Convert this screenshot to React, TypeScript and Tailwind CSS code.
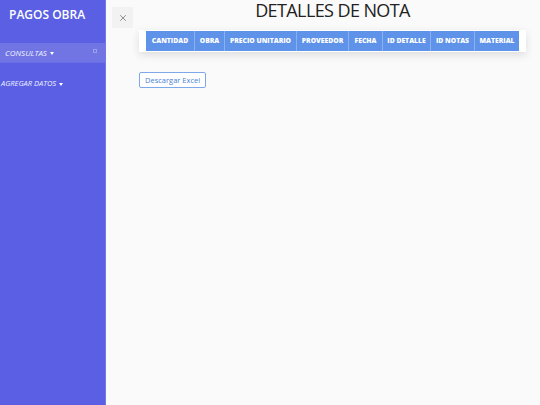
import { X } from "lucide-react"

const cols = [
  { label: "CANTIDAD", w: "w-[48px]" },
  { label: "OBRA", w: "w-[30px]" },
  { label: "PRECIO UNITARIO", w: "w-[72px]" },
  { label: "PROVEEDOR", w: "w-[52px]" },
  { label: "FECHA", w: "w-[34px]" },
  { label: "ID DETALLE", w: "w-[48px]" },
  { label: "ID NOTAS", w: "w-[44px]" },
  { label: "MATERIAL", w: "w-[45px]" },
]

function Caret() {
  return <span className="ml-[3px] inline-block h-0 w-0 border-x-[2.5px] border-t-[3px] border-x-transparent border-t-white align-middle" />
}

export default function App() {
  return (
    <div className="flex h-[405px] w-[540px] overflow-hidden bg-[#fafafa] font-['Open_Sans',sans-serif]">
      <aside className="flex w-[106px] shrink-0 flex-col border-r border-[#7479ea] bg-[#5a5fe4] text-white">
        <div className="pl-[9px] pt-[6px] text-[12px] font-semibold leading-[18px]">PAGOS OBRA</div>
        <div className="mt-[19px] flex h-[20px] items-center justify-between border-b border-[#6a6fe6] bg-[#7075e3] pl-[5px] pr-[8px] text-[8px] italic text-[#eef0ff]">
          <span>
            CONSULTAS
            <Caret />
          </span>
          <span className="mb-[4px] h-[4px] w-[4px] border border-[#9aa0f0]" />
        </div>
        <div className="mt-[15px] pl-[1px] text-[7.5px] italic leading-[10px] text-[#eef0ff]">
          AGREGAR DATOS
          <Caret />
        </div>
      </aside>

      <main className="relative flex-1">
        <button className="absolute left-[6px] top-[7px] flex h-[21px] w-[21px] items-center justify-center bg-[#f2f2f2] text-[#555]">
          <X size={10} strokeWidth={1.5} />
        </button>
        <div className="ml-[33px] flex w-[387px] flex-col">
          <h1 className="pt-[1px] text-center text-[18px] font-medium leading-[18px] tracking-[-0.6px] text-[#222]">DETALLES DE NOTA</h1>
          <div className="mt-[11px] bg-white px-[7px] py-[1px] shadow-[0_3px_8px_rgba(0,0,0,0.12)]">
            <div className="flex h-[20px] bg-[#5f93ea]">
              {cols.map((c, i) => (
                <div
                  key={c.label}
                  className={`${c.w} flex shrink-0 items-center justify-center whitespace-nowrap text-[6.8px] font-extrabold text-white ${i > 0 ? "border-l border-[#8ab0f0]" : ""}`}
                >
                  {c.label}
                </div>
              ))}
            </div>
          </div>
          <div className="mt-[20px] flex">
            <button className="h-[16px] rounded-[2px] border border-[#7fa8e8] bg-white px-[5px] text-[7.5px] leading-[14px] text-[#4a7fd8]">
              Descargar Excel
            </button>
          </div>
        </div>
      </main>
    </div>
  )
}
